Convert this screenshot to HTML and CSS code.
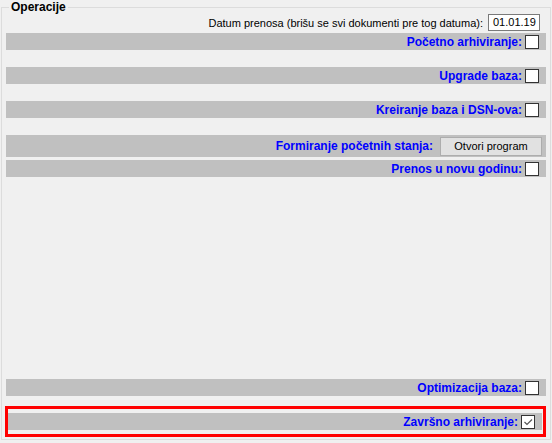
FILE: index.html
```html
<!DOCTYPE html>
<html lang="sr">
<head>
    <meta charset="UTF-8">
    <title>Operacije</title>
    <link rel="stylesheet" href="styles.css">
</head>
<body>
    <fieldset class="group">
        <legend>Operacije</legend>
        <div class="ops">
            <div class="date-row">
                <span>Datum prenosa (brišu se svi dokumenti pre tog datuma):</span>
                <span class="date-box">01.01.19</span>
            </div>
            <div class="bar">
                <span class="label">Početno arhiviranje:</span>
                <span class="check"></span>
            </div>
            <div class="bar spaced">
                <span class="label">Upgrade baza:</span>
                <span class="check"></span>
            </div>
            <div class="bar spaced">
                <span class="label">Kreiranje baza i DSN-ova:</span>
                <span class="check"></span>
            </div>
            <div class="bar spaced tall">
                <span class="label">Formiranje početnih stanja:</span>
                <button type="button" class="btn">Otvori program</button>
            </div>
            <div class="bar tight">
                <span class="label">Prenos u novu godinu:</span>
                <span class="check"></span>
            </div>
            <div class="bar pushed">
                <span class="label">Optimizacija baza:</span>
                <span class="check"></span>
            </div>
            <div class="highlight">
                <div class="bar">
                    <span class="label">Završno arhiviranje:</span>
                    <span class="check">
                        <svg width="12" height="12" viewBox="0 0 12 12"><polyline points="2.5,6 5,8.5 10,3.5" fill="none" stroke="#555" stroke-width="1.2"/></svg>
                    </span>
                </div>
            </div>
        </div>
    </fieldset>
</body>
</html>
```

FILE: styles.css
```css
body {
    margin: 0;
    background: #f0f0f0;
    font-family: "Liberation Sans", Arial, sans-serif;
    font-size: 11px;
    color: #000;
}
.group {
    box-sizing: border-box;
    width: 550px;
    height: 440px;
    margin: 0 0 0 1px;
    padding: 0 4px 2px;
    border: 1px solid #dcdcdc;
}
.group legend {
    margin-left: 3px;
    padding: 0 2px;
    font-weight: bold;
    font-size: 12px;
    line-height: 14px;
}
.ops {
    display: flex;
    flex-direction: column;
    height: 100%;
}
.date-row {
    display: flex;
    justify-content: flex-end;
    align-items: center;
    gap: 5px;
    height: 17px;
    padding-right: 6px;
}
.date-box {
    box-sizing: border-box;
    width: 52px;
    height: 17px;
    padding-left: 4px;
    line-height: 15px;
    background: #fff;
    border: 1px solid #7a7a7a;
}
.bar {
    display: flex;
    justify-content: flex-end;
    align-items: center;
    gap: 3px;
    height: 17px;
    margin-top: 2px;
    padding-right: 7px;
    background: #c0c0c0;
}
.bar.spaced {
    margin-top: 17px;
}
.bar.tall {
    height: 22px;
    padding-right: 4px;
    gap: 7px;
}
.bar.tight {
    margin-top: 3px;
}
.bar.pushed {
    margin-top: auto;
}
.label {
    color: #0000ff;
    font-weight: bold;
    font-size: 12px;
}
.check {
    box-sizing: border-box;
    display: flex;
    align-items: center;
    justify-content: center;
    width: 14px;
    height: 14px;
    background: #fff;
    border: 1px solid #333;
}
.btn {
    box-sizing: border-box;
    width: 102px;
    height: 19px;
    padding: 0;
    font-family: inherit;
    font-size: 11px;
    background: #e1e1e1;
    border: 1px solid #adadad;
}
.highlight {
    margin-top: 10px;
    padding: 4px 1px 4px 0;
    border: 3px solid #ff0000;
    margin-left: -1px;
}
.highlight .bar {
    margin-top: 0;
}
```
